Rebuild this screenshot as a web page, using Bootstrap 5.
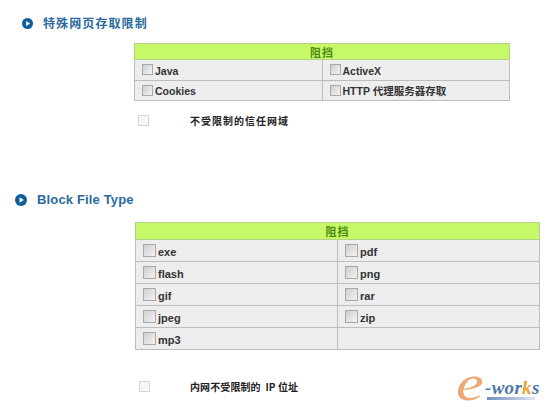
<!DOCTYPE html>
<html lang="zh">
<head>
<meta charset="utf-8">
<title>Block</title>
<link rel="stylesheet" href="https://cdn.jsdelivr.net/npm/bootstrap@5.3.0/dist/css/bootstrap.min.css">
<style>
html,body{margin:0;height:412px;overflow:hidden;background:#fff}
body{position:relative;font-family:"Liberation Sans","Noto Sans CJK SC",sans-serif;font-size:11px;font-weight:700;color:#333}
.sect-one{height:170px;padding-top:15px}
.sect-two{height:242px;padding-top:22px}
.sect-head{display:flex;align-items:center;color:#2a6a9c;font-size:12px;line-height:16px;margin:0;font-weight:700}
.sect-one .sect-head{padding-left:22px;gap:10px}
.sect-two .sect-head{padding-left:15px;gap:10px;font-size:13px;letter-spacing:.15px}
.sect-one .sect-head span{letter-spacing:1.1px;font-family:"Noto Sans CJK SC",sans-serif}
.dot-icon{width:11px;height:11px;flex:none;display:block}
.sect-two .dot-icon{width:12px;height:12px}
.block-tbl{border-collapse:collapse;background:#ededed;table-layout:fixed}
.block-tbl td,.block-tbl th{border:1px solid #bdbdbd;padding:0 0 0 7px;vertical-align:middle;white-space:nowrap}
.block-tbl th{background:#c6f968;border-color:#b4cf87;color:#4d8a12;font-size:11px;text-align:center;padding:0;letter-spacing:1px;font-family:"Noto Sans CJK SC",sans-serif}
.tbl-one{margin:12px 0 0 134px;width:376px}
.tbl-one th{height:16px;line-height:14px}
.tbl-one td{height:20.5px;font-size:10.5px}
.tbl-two{margin:14px 0 0 135px;width:405px}
.tbl-two th{height:17px;line-height:15px}
.tbl-two td{height:22px;padding-left:7px;font-size:11px}
.tbl-one .c-left{width:188px}
.tbl-two .c-left{width:202px}
.box-label{display:flex;align-items:center;gap:2px;line-height:14px}
.box-text{padding-top:2px}
.tick{width:11px;height:11px;flex:none;border:1px solid #a8a8a8;background:linear-gradient(135deg,#cfcfcf,#f3f3f3);display:inline-block}
.tbl-two .tick{width:13px;height:13px}
.free-row{display:flex;align-items:center;color:#222;font-size:10px}
.free-row .pale{width:11px;height:11px;border:1px solid #d5d5d5;background:#f6f6f6;flex:none}
.free-one{margin:12px 0 0 138px;gap:41px;letter-spacing:1px}
.free-two{margin:29px 0 0 139px;gap:40px;letter-spacing:.1px}
.cjk{font-family:"Noto Sans CJK SC",sans-serif}
.wm{position:absolute;left:456px;top:357px;width:92px;height:54px}
.wm-e{position:absolute;left:0;top:1px;font:italic 400 50px/50px "Liberation Serif",serif;color:#eda873;transform:scaleX(1.25);transform-origin:left center}
.wm-t{position:absolute;left:29px;top:21px;font:italic 700 19px/20px "Liberation Serif",serif;color:#4b78a8;letter-spacing:.3px}
.wm-t b{color:#f0a030}
.wm-b{position:absolute;left:31px;top:40px;width:48px;height:3px;background:linear-gradient(90deg,#6f8fc0,#dfe6f0)}
</style>
</head>
<body>
<section class="sect-one">
  <h2 class="sect-head">
    <svg class="dot-icon" viewBox="0 0 12 12"><circle cx="6" cy="6" r="6" fill="#0f5f9f"/><path d="M4.6 3.2 8.8 6 4.6 8.8Z" fill="#fff"/></svg>
    <span>特殊网页存取限制</span>
  </h2>
  <table class="block-tbl tbl-one">
    <tr><th colspan="2">阻挡</th></tr>
    <tr><td class="c-left"><span class="box-label"><i class="tick"></i><span class="box-text">Java</span></span></td><td><span class="box-label"><i class="tick"></i><span class="box-text">ActiveX</span></span></td></tr>
    <tr><td class="c-left"><span class="box-label"><i class="tick"></i><span class="box-text">Cookies</span></span></td><td><span class="box-label"><i class="tick"></i><span class="box-text">HTTP 代理服务器存取</span></span></td></tr>
  </table>
  <div class="free-row free-one"><i class="pale"></i><span class="cjk">不受限制的信任网域</span></div>
</section>
<section class="sect-two">
  <h2 class="sect-head">
    <svg class="dot-icon" viewBox="0 0 12 12"><circle cx="6" cy="6" r="6" fill="#0f5f9f"/><path d="M4.6 3.2 8.8 6 4.6 8.8Z" fill="#fff"/></svg>
    <span>Block File Type</span>
  </h2>
  <table class="block-tbl tbl-two">
    <tr><th colspan="2">阻挡</th></tr>
    <tr><td class="c-left"><span class="box-label"><i class="tick"></i><span class="box-text">exe</span></span></td><td><span class="box-label"><i class="tick"></i><span class="box-text">pdf</span></span></td></tr>
    <tr><td class="c-left"><span class="box-label"><i class="tick"></i><span class="box-text">flash</span></span></td><td><span class="box-label"><i class="tick"></i><span class="box-text">png</span></span></td></tr>
    <tr><td class="c-left"><span class="box-label"><i class="tick"></i><span class="box-text">gif</span></span></td><td><span class="box-label"><i class="tick"></i><span class="box-text">rar</span></span></td></tr>
    <tr><td class="c-left"><span class="box-label"><i class="tick"></i><span class="box-text">jpeg</span></span></td><td><span class="box-label"><i class="tick"></i><span class="box-text">zip</span></span></td></tr>
    <tr><td class="c-left"><span class="box-label"><i class="tick"></i><span class="box-text">mp3</span></span></td><td></td></tr>
  </table>
  <div class="free-row free-two"><i class="pale"></i><span class="cjk">内网不受限制的&nbsp; IP 位址</span></div>
</section>
<div class="wm" aria-label="e-works">
  <span class="wm-e">e</span><span class="wm-t">-wor<b>k</b>s</span><i class="wm-b"></i>
</div>
<script src="https://cdn.jsdelivr.net/npm/bootstrap@5.3.0/dist/js/bootstrap.bundle.min.js"></script>
</body>
</html>
